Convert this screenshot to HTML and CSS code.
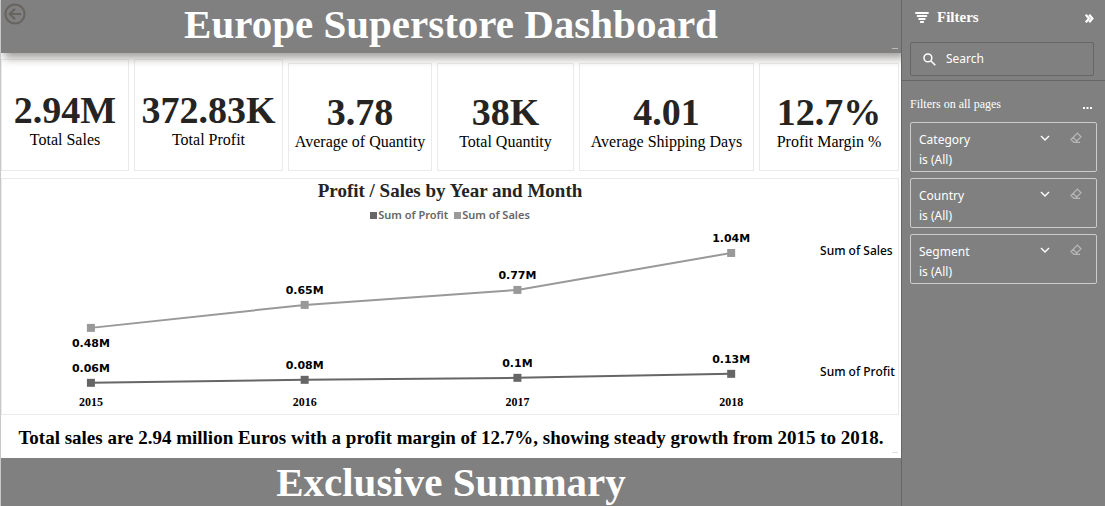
FILE: index.html
```html
<!DOCTYPE html>
<html lang="en">
<head>
<meta charset="utf-8">
<title>Europe Superstore Dashboard</title>
<link rel="stylesheet" href="styles.css">
</head>
<body>
<div class="app">
  <main class="report">
    <header class="banner">
      <button class="back" type="button" aria-label="Back">
        <svg width="22" height="22" viewBox="0 0 22 22" fill="none" stroke="#67635f" stroke-width="2"><circle cx="11" cy="11" r="9.6"/><path d="M17 11H6M11 5.8 5.8 11l5.2 5.2" stroke-width="2.2"/></svg>
      </button>
      <h1 class="banner-title">Europe Superstore Dashboard</h1>
      <span class="dash dash-light"></span>
    </header>

    <section class="kpis">
      <div class="kpi kpi-tall"><div class="kpi-value">2.94M</div><div class="kpi-label">Total Sales</div></div>
      <div class="kpi kpi-tall"><div class="kpi-value">372.83K</div><div class="kpi-label">Total Profit</div></div>
      <div class="kpi"><div class="kpi-value">3.78</div><div class="kpi-label">Average of Quantity</div></div>
      <div class="kpi"><div class="kpi-value">38K</div><div class="kpi-label">Total Quantity</div></div>
      <div class="kpi"><div class="kpi-value">4.01</div><div class="kpi-label">Average Shipping Days</div></div>
      <div class="kpi"><div class="kpi-value">12.7%</div><div class="kpi-label">Profit Margin %</div></div>
    </section>

    <section class="chart">
      <h2 class="chart-title">Profit / Sales by Year and Month</h2>
      <div class="legend">
        <span class="legend-item"><i class="swatch swatch-profit"></i>Sum of Profit</span>
        <span class="legend-item"><i class="swatch swatch-sales"></i>Sum of Sales</span>
      </div>
      <svg class="plot" viewBox="0 0 897 189" role="img" aria-label="Profit and sales by year">
        <polyline class="line-sales" points="89,103 303,80 516,65 730,28"/>
        <polyline class="line-profit" points="89,158 303,155 516,153 730,149"/>
        <g class="mark-sales">
          <rect x="85" y="99" width="8" height="8"/><rect x="299" y="76" width="8" height="8"/><rect x="512" y="61" width="8" height="8"/><rect x="726" y="24" width="8" height="8"/>
        </g>
        <g class="mark-profit">
          <rect x="85" y="154" width="8" height="8"/><rect x="299" y="151" width="8" height="8"/><rect x="512" y="149" width="8" height="8"/><rect x="726" y="145" width="8" height="8"/>
        </g>
        <g class="data-label">
          <text x="89" y="122">0.48M</text><text x="303" y="69">0.65M</text><text x="516" y="54">0.77M</text><text x="730" y="17">1.04M</text>
          <text x="89" y="147">0.06M</text><text x="303" y="144">0.08M</text><text x="516" y="142">0.1M</text><text x="730" y="138">0.13M</text>
        </g>
        <g class="axis-label">
          <text x="89" y="181">2015</text><text x="303" y="181">2016</text><text x="516" y="181">2017</text><text x="730" y="181">2018</text>
        </g>
        <g class="series-label">
          <text x="819" y="30">Sum of Sales</text><text x="819" y="151">Sum of Profit</text>
        </g>
      </svg>
    </section>

    <section class="note">
      <p class="note-text">Total sales are 2.94 million Euros with a profit margin of 12.7%, showing steady growth from 2015 to 2018.</p>
      <span class="dash"></span>
    </section>

    <section class="summary"><h2 class="banner-title">Exclusive Summary</h2></section>
  </main>

  <aside class="filters">
    <div class="filters-top">
      <div class="filters-head">
        <svg width="14" height="11" viewBox="0 0 14 11" fill="none" stroke="#fff" stroke-width="1.8" stroke-linecap="round"><path d="M1 1h12M2.6 4h8.8M4.2 7h5.6M5.8 10h2.4"/></svg>
        <h2 class="filters-title">Filters</h2>
        <button class="icon-button collapse" type="button" aria-label="Collapse filters">
          <svg width="9" height="9" viewBox="0 0 9 9" fill="none" stroke="#fff" stroke-width="2.2"><path d="M.7.7 4 4.5.7 8.3M4.2.7l3.2 3.8-3.2 3.8"/></svg>
        </button>
      </div>
      <label class="search">
        <svg width="13" height="13" viewBox="0 0 13 13" fill="none" stroke="#fff" stroke-width="1.5"><circle cx="4.9" cy="4.9" r="3.9"/><path d="m7.8 7.8 4.5 4.5"/></svg>
        <input class="search-input" type="text" placeholder="Search" aria-label="Search">
      </label>
    </div>
    <div class="filters-body">
      <div class="group-head">
        <h3 class="group-title">Filters on all pages</h3>
        <button class="icon-button more" type="button" aria-label="More options"><svg width="9" height="2" viewBox="0 0 9 2" fill="#fff"><path d="M0 0h2v2H0zM3.5 0h2v2h-2zM7 0h2v2H7z"/></svg></button>
      </div>
      <div class="filter-card">
        <div><div>Category</div><div>is (All)</div></div>
        <div class="card-actions">
          <button class="icon-button" type="button" aria-label="Expand Category"><svg width="10" height="6" viewBox="0 0 10 6" fill="none" stroke="#fff" stroke-width="1.4"><path d="m1 1 4 4 4-4"/></svg></button>
          <button class="icon-button" type="button" aria-label="Clear Category"><svg width="12" height="12" viewBox="0 0 12 12" fill="none" stroke="#b8b8b8" stroke-width="1.2"><path d="M7.4 1.2 1 7.6l2.600 2.600h2L11 4.800zM3.200 5.400l3.900 3.900M5 10.400h5"/></svg></button>
        </div>
      </div>
      <div class="filter-card">
        <div><div>Country</div><div>is (All)</div></div>
        <div class="card-actions">
          <button class="icon-button" type="button" aria-label="Expand Country"><svg width="10" height="6" viewBox="0 0 10 6" fill="none" stroke="#fff" stroke-width="1.4"><path d="m1 1 4 4 4-4"/></svg></button>
          <button class="icon-button" type="button" aria-label="Clear Country"><svg width="12" height="12" viewBox="0 0 12 12" fill="none" stroke="#b8b8b8" stroke-width="1.2"><path d="M7.4 1.2 1 7.6l2.600 2.600h2L11 4.800zM3.200 5.400l3.900 3.900M5 10.400h5"/></svg></button>
        </div>
      </div>
      <div class="filter-card">
        <div><div>Segment</div><div>is (All)</div></div>
        <div class="card-actions">
          <button class="icon-button" type="button" aria-label="Expand Segment"><svg width="10" height="6" viewBox="0 0 10 6" fill="none" stroke="#fff" stroke-width="1.4"><path d="m1 1 4 4 4-4"/></svg></button>
          <button class="icon-button" type="button" aria-label="Clear Segment"><svg width="12" height="12" viewBox="0 0 12 12" fill="none" stroke="#b8b8b8" stroke-width="1.2"><path d="M7.4 1.2 1 7.6l2.600 2.600h2L11 4.800zM3.200 5.400l3.900 3.900M5 10.400h5"/></svg></button>
        </div>
      </div>
    </div>
  </aside>
</div>
</body>
</html>
```
FILE: styles.css
```css
* { box-sizing: border-box; }
body { margin: 0; font-family: "Liberation Serif", "Times New Roman", serif; color: #000; background: #fff; }
h1, h2, h3, p { margin: 0; }
button { border: 0; padding: 0; background: none; cursor: pointer; }
svg { display: block; }

.app { display: flex; min-height: 100vh; }
.report { flex: 1; min-width: 0; display: flex; flex-direction: column; border-left: 1px solid #c8c8c8; }

.banner { position: relative; z-index: 1; background: #808080; text-align: center; box-shadow: 4px 4px 9px 1px #a19f9d; padding-bottom: 5px; clip-path: inset(0 0 -20px 0); }
.banner-title { font-size: 41px; line-height: 48px; font-weight: 700; color: #fff; text-align: center; }
.back { position: absolute; left: 3px; top: 3px; }
.dash { position: absolute; right: 3px; bottom: 5px; width: 6px; height: 1px; background: #ddd; }
.dash-light { bottom: 4px; background: #bbb; }

.kpis { display: grid; grid-template-columns: 128fr 149fr 144fr 137fr 175fr 140fr; gap: 5px; padding: 6px 2px 0 0; align-items: end; }
.kpi { height: 108px; border: 1px solid #eaeaea; display: flex; flex-direction: column; align-items: center; justify-content: center; white-space: nowrap; padding-top: 10px; }
.kpi-tall { height: 112px; }
.kpi-value { font-size: 38px; line-height: 40px; font-weight: 700; color: #252423; }
.kpi-label { font-size: 16px; line-height: 20px; }

.chart { margin: 7px 2px 0 0; border: 1px solid #eaeaea; }
.chart-title { font-size: 19px; line-height: 24px; color: #252423; text-align: center; }
.legend { display: flex; justify-content: center; gap: 6px; padding: 4px 0 2px; font: 600 11px/16px "Noto Sans", sans-serif; color: #666; }
.legend-item { display: flex; align-items: center; gap: 1px; }
.swatch { width: 7px; height: 7px; }
.swatch-profit { background: #666; }
.swatch-sales { background: #999; }
.plot { width: 100%; height: auto; }
.line-sales, .line-profit { fill: none; stroke-width: 2; }
.line-sales { stroke: #999; }
.line-profit { stroke: #666; }
.mark-sales { fill: #999; }
.mark-profit { fill: #666; }
.data-label { font: 700 11px "DejaVu Sans", sans-serif; text-anchor: middle; }
.axis-label { font: 700 12px "Liberation Serif", serif; text-anchor: middle; }
.series-label { font: 500 12px "Noto Sans", sans-serif; }

.note { position: relative; padding: 12px 0 9px; }
.note-text { font-size: 19px; line-height: 22px; font-weight: 700; text-align: center; }
.summary { flex: 1; background: #808080; border-bottom: 1px solid #757575; }

.filters { flex: 0 0 204px; min-width: 0; background: #808080; border-left: 1px solid #666; color: #fff; font: 12px/20px "Noto Sans", sans-serif; }
.filters-top { padding: 8px 11px 4px 8px; border-bottom: 1px solid #666; }
.filters-head { display: flex; align-items: center; gap: 8px; padding-left: 5px; margin-bottom: 16px; }
.filters-title { font: 700 15px/18px "Liberation Serif", serif; }
.collapse { margin-left: auto; padding-top: 2px; }
.search { display: flex; align-items: center; gap: 10px; height: 34px; padding: 0 12px; border: 1px solid #666; border-radius: 2px; }
.search-input { flex: 1; min-width: 0; border: 0; padding: 0; outline: 0; background: none; color: #fff; font: 12px/20px "Noto Sans", sans-serif; }
.search-input::placeholder { color: #fff; opacity: 1; }
.filters-body { display: flex; flex-direction: column; gap: 6px; padding: 13px 8px; }
.group-head { display: flex; align-items: center; justify-content: space-between; padding-right: 5px; margin-bottom: 2px; }
.group-title { font: 400 12px/20px "Liberation Serif", serif; }
.more { padding-top: 8px; }
.filter-card { display: flex; justify-content: space-between; align-items: flex-start; height: 50px; padding: 7px 14px 0 8px; border: 1px solid #ccc; border-radius: 2px; }
.card-actions { display: flex; align-items: center; gap: 20px; padding-top: 2px; }
```
